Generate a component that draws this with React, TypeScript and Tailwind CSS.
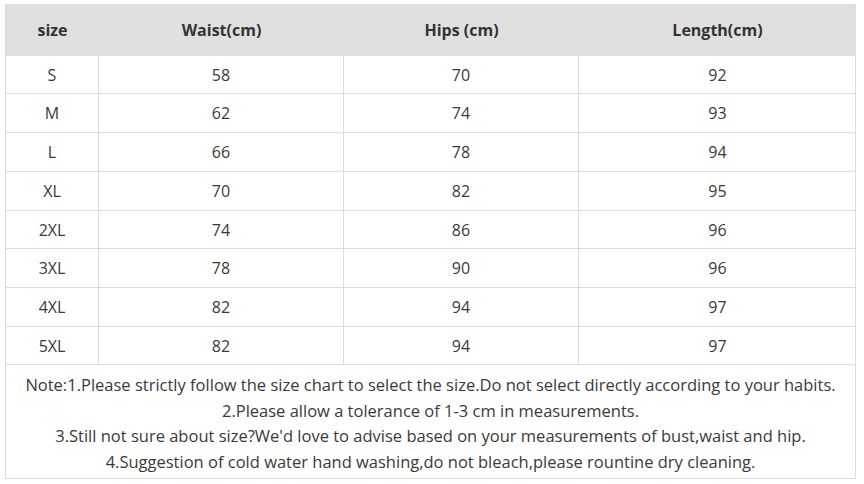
const rows = [
  { size: "S", waist: "58", hips: "70", length: "92", h: "h-[38px]" },
  { size: "M", waist: "62", hips: "74", length: "93", h: "h-[39px]" },
  { size: "L", waist: "66", hips: "78", length: "94", h: "h-[39px]" },
  { size: "XL", waist: "70", hips: "82", length: "95", h: "h-[39px]" },
  { size: "2XL", waist: "74", hips: "86", length: "96", h: "h-[38px]" },
  { size: "3XL", waist: "78", hips: "90", length: "96", h: "h-[39px]" },
  { size: "4XL", waist: "82", hips: "94", length: "97", h: "h-[39px]" },
  { size: "5XL", waist: "82", hips: "94", length: "97", h: "h-[38px]" },
]

const notes = [
  "Note:1.Please strictly follow the size chart to select the size.Do not select directly according to your habits.",
  "2.Please allow a tolerance of 1-3 cm in measurements.",
  "3.Still not sure about size?We'd love to advise based on your measurements of bust,waist and hip.",
  "4.Suggestion of cold water hand washing,do not bleach,please rountine dry cleaning.",
]

const cols = "grid grid-cols-[93px_245px_235px_277px]"

export default function App() {
  return (
    <div
      className="w-[864px] h-[484px] bg-white pt-[4px] pl-[5px] text-[#333]"
      style={{ fontFamily: '"Open Sans", "Noto Sans", sans-serif' }}
    >
      <div className="w-[851px] border-l border-r border-b border-[#dcdcdc]">
        <div className={`${cols} h-[52px] bg-[#e0e0e0] text-[16px] font-bold`}>
          <div className="flex items-center justify-center">size</div>
          <div className="flex items-center justify-center">Waist(cm)</div>
          <div className="flex items-center justify-center">Hips (cm)</div>
          <div className="flex items-center justify-center">Length(cm)</div>
        </div>
        {rows.map((r) => (
          <div key={r.size} className={`${cols} ${r.h} text-[16px] text-[#3a3a3a]`}>
            <div className="flex items-center justify-center border-b border-r border-[#dcdcdc]">{r.size}</div>
            <div className="flex items-center justify-center border-b border-r border-[#dcdcdc]">{r.waist}</div>
            <div className="flex items-center justify-center border-b border-r border-[#dcdcdc]">{r.hips}</div>
            <div className="flex items-center justify-center border-b border-[#dcdcdc]">{r.length}</div>
          </div>
        ))}
        <div className="h-[113px] pt-[7px] text-center text-[16.5px] leading-[25.5px] text-[#3a3a3a]">
          {notes.map((n) => (
            <div key={n}>{n}</div>
          ))}
        </div>
      </div>
    </div>
  )
}
